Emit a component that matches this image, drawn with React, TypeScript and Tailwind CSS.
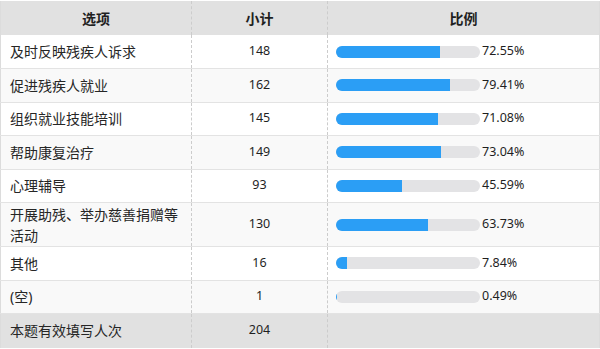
const rows = [
  { label: "及时反映残疾人诉求", count: 148, pct: 72.55 },
  { label: "促进残疾人就业", count: 162, pct: 79.41 },
  { label: "组织就业技能培训", count: 145, pct: 71.08 },
  { label: "帮助康复治疗", count: 149, pct: 73.04 },
  { label: "心理辅导", count: 93, pct: 45.59 },
  { label: "开展助残、举办慈善捐赠等活动", count: 130, pct: 63.73, tall: true },
  { label: "其他", count: 16, pct: 7.84 },
  { label: "(空)", count: 1, pct: 0.49 },
];

function Bar({ pct }: { pct: number }) {
  return (
    <div className="flex items-center">
      <div className="h-[12px] w-[144px] rounded-full bg-[#e3e3e5] overflow-hidden">
        <div className="h-full bg-[#2b9ef5]" style={{ width: `${pct}%` }} />
      </div>
      <span className="ml-[2px] text-[12.5px] text-[#1f1f1f]">{pct.toFixed(2)}%</span>
    </div>
  );
}

export default function App() {
  return (
    <div className="w-[600px] h-[349px] bg-white pt-px font-['Noto_Sans','Noto_Sans_CJK_SC',sans-serif] text-[14px] text-[#262626]">
      <table className="w-[600px] table-fixed border-collapse border-l border-r border-[#dcdcdc]">
        <colgroup>
          <col className="w-[191px]" />
          <col className="w-[136px]" />
          <col />
        </colgroup>
        <thead>
          <tr className="h-[34px] bg-[#e1e1e1] font-bold text-[#1f1f1f]">
            <th className="text-center">选项</th>
            <th className="text-center border-l border-dashed border-[#cccccc]">小计</th>
            <th className="text-center border-l border-dashed border-[#cccccc]">比例</th>
          </tr>
        </thead>
        <tbody>
          {rows.map((r, i) => (
            <tr
              key={r.label}
              className={`${r.tall ? "h-[44px]" : "h-[33.5px]"} ${i % 2 ? "bg-[#f9f9f9]" : "bg-white"} border-b border-[#e3e3e3]`}
            >
              <td className="pl-[9px] pr-2 leading-[21px] align-middle">{r.label}</td>
              <td className="text-center text-[12.5px] text-[#1f1f1f] border-l border-dashed border-[#cccccc]">{r.count}</td>
              <td className="pl-[8px] border-l border-dashed border-[#cccccc]">
                <Bar pct={r.pct} />
              </td>
            </tr>
          ))}
          <tr className="h-[34px] bg-[#e1e1e1]">
            <td className="pl-[9px]">本题有效填写人次</td>
            <td className="text-center text-[12.5px] text-[#1f1f1f] border-l border-dashed border-[#cccccc]">204</td>
            <td className="border-l border-dashed border-[#cccccc]" />
          </tr>
        </tbody>
      </table>
    </div>
  );
}
